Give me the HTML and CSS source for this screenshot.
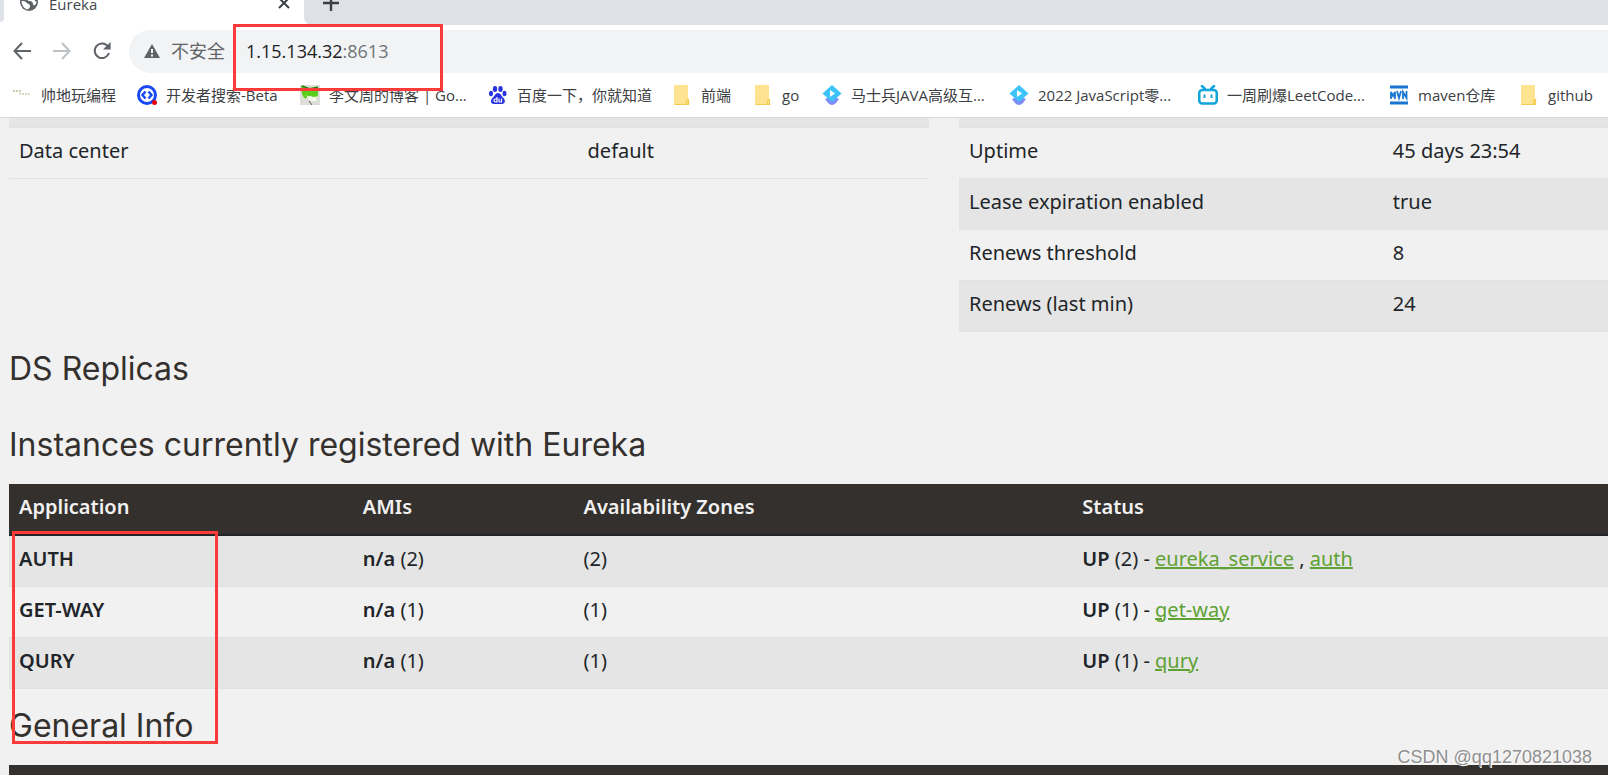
FILE: index.html
```html
<!DOCTYPE html>
<html lang="zh-CN">
<head>
<meta charset="utf-8">
<title>Eureka</title>
<link rel="stylesheet" href="styles.css">
</head>
<body>
<header class="browser">
  <div class="tabstrip">
    <div class="prev-tab"></div>
    <div class="tab">
      <svg class="tab-icon" viewBox="0 0 20 20"><circle cx="10" cy="10" r="9" fill="#5f6368"/><path d="M2.500 9c2 0 4 0 5 1.500S11 12 11 14s-1 2-2 3.500C5 17 2.500 13 2.500 9zM12 2.500c-1 2-1 3-3 4-1 2 0 2.500 2 2.500s3 1.500 3 3 1 1.500 2 1c1-1 1.500-2 1.500-3.500-1.500 0-2-1-2-2.500s-1-3-3.500-4.500z" fill="#fff"/></svg>
      <span class="tab-title">Eureka</span>
      <button class="icon-button tab-close" aria-label="关闭"><svg width="12" height="12" viewBox="0 0 12 12"><path d="M1 1l10 10M11 1L1 11" stroke="#3c4043" stroke-width="2"/></svg></button>
    </div>
    <button class="icon-button new-tab" aria-label="新标签页"><svg width="16" height="16" viewBox="0 0 16 16"><path d="M8 0v16M0 8h16" stroke="#3c4043" stroke-width="2.400"/></svg></button>
  </div>
  <div class="toolbar">
    <div class="nav-buttons">
      <button class="icon-button" aria-label="后退"><svg width="18" height="18" viewBox="0 0 18 18" fill="none" stroke="#5f6368" stroke-width="2"><path d="M18 9H2M9 1L1.500 9L9 17"/></svg></button>
      <button class="icon-button" aria-label="前进"><svg width="18" height="18" viewBox="0 0 18 18" fill="none" stroke="#bdc1c6" stroke-width="2"><path d="M0 9h16M9 1l7.500 8L9 17"/></svg></button>
      <button class="icon-button" aria-label="重新加载"><svg width="18" height="18" viewBox="0 0 18 18"><path d="M15 4.500A7.300 7.300 0 1 0 16 11" fill="none" stroke="#5f6368" stroke-width="2"/><path d="M17.600 0v7.500H10z" fill="#5f6368"/></svg></button>
    </div>
    <div class="omnibox">
      <svg class="warn" width="16" height="14" viewBox="0 0 16 14"><path d="M8 0l8 14H0z" fill="#5f6368"/><path d="M8 5v4M8 10.500v2" stroke="#f1f3f4" stroke-width="2"/></svg>
      <span class="insecure">不安全</span>
      <span class="url"><b>1.15.134.32</b>:8613</span>
    </div>
  </div>
  <nav class="bookmarks">
    <a href="#"><svg viewBox="0 0 20 20"><g stroke="#b9bd8c" stroke-width="1.500" stroke-dasharray="2 1"><path d="M1 6h9"/><path d="M7 9h12" stroke="#cfccb4"/></g></svg><span>帅地玩编程</span></a>
    <a href="#"><svg viewBox="0 0 20 20"><circle cx="10" cy="10" r="8.500" fill="#fff" stroke="#1848f5" stroke-width="3"/><path d="M8.500 6.500L5.500 10l3 3.500M11.500 6.500l3 3.500-3 3.500" fill="none" stroke="#1848f5" stroke-width="2.500"/><circle cx="17.500" cy="17.500" r="2.500" fill="#e60012"/></svg><span>开发者搜索-Beta</span></a>
    <a href="#"><svg viewBox="0 0 20 20"><path d="M0 0h20v20H0z" fill="#deded8"/><path d="M1 1l6 2 11-1v8l-2 4-12-1-2-4z" fill="#5bcb1c"/><path d="M2 1l8 3 8-2" stroke="#267a12" stroke-width="1.500" fill="none"/><path d="M6 10q2 2 5 1 3 2 6 0l-1 5q-5 1-8-2z" fill="#f2f7e8"/><path d="M9 16l3 4" stroke="#555"/></svg><span>李文周的博客 | Go...</span></a>
    <a href="#"><svg viewBox="0 0 20 20"><g fill="#2932e1"><ellipse cx="7" cy="4" rx="2.200" ry="3"/><ellipse cx="12.500" cy="4" rx="2.200" ry="3"/><ellipse cx="3" cy="8.500" rx="2" ry="2.800"/><ellipse cx="16.500" cy="8.500" rx="2" ry="2.800"/><path d="M10 8c2.500 0 3.500 3 5.500 5s2 6-1.500 6H6c-4 0-3.500-4-1.500-6S7.500 8 10 8z"/></g><path d="M9 12v5H7.500c-2 0-2-3 0-3H9M11 13.500V16q0 1 1 1h1.500v-3.500" fill="none" stroke="#fff" stroke-width="1.200"/></svg><span>百度一下，你就知道</span></a>
    <a href="#"><svg viewBox="0 0 20 20"><use href="#folder"/></svg><span>前端</span></a>
    <a href="#"><svg viewBox="0 0 20 20"><use href="#folder"/></svg><span>go</span></a>
    <a href="#"><svg viewBox="0 0 20 20"><use href="#gem"/></svg><span>马士兵JAVA高级互...</span></a>
    <a href="#"><svg viewBox="0 0 20 20"><use href="#gem"/></svg><span>2022 JavaScript零...</span></a>
    <a href="#"><svg viewBox="0 0 20 20"><rect x="1.250" y="5" width="17.500" height="13.500" rx="3" fill="#fff" stroke="#12a5dc" stroke-width="2.500"/><path d="M4 1l3 3M16 1l-3 3" stroke="#12a5dc" stroke-width="2.500" stroke-linecap="round"/><path d="M6.500 9.500v3.500M13.500 9.500v3.500" stroke="#12a5dc" stroke-width="2"/></svg><span>一周刷爆LeetCode...</span></a>
    <a href="#"><svg viewBox="0 0 20 20"><path d="M1 2h18M1 18h18" stroke="#1976d2" stroke-width="3"/><path d="M2 14V7l2 4 2-4v7M8 6l2 7 2-7M14 14V7l3.500 6V6" fill="none" stroke="#1976d2" stroke-width="1.800"/></svg><span>maven仓库</span></a>
    <a href="#"><svg viewBox="0 0 20 20"><use href="#folder"/></svg><span>github</span></a>
  </nav>
  <svg class="symbols" aria-hidden="true"><defs>
    <g id="folder"><path d="M3 0h12q1 0 1 1v13h1v5H3q-1 0-1-1V1q0-1 1-1z" fill="#fee391"/><path d="M2.500 18.500q0 1 1 1h13v-5l-2 1v3.500" fill="none" stroke="#f5cb4f" stroke-width="1.200"/></g>
    <g id="gem"><path d="M3 14l7-3 7 3-3 4q-4 4-8 0z" fill="#7d8cf7"/><path d="M10 0l9.500 8.500L10 17 .5 8.500z" fill="#3cc4fa"/><path d="M8 5l5 3.500-5 3.500z" fill="#fff"/></g>
  </defs></svg>
</header>
<main class="page">
  <div class="info-columns">
    <table class="info info-left">
      <tbody>
        <tr class="cut"><td></td><td></td></tr>
        <tr><td>Data center</td><td>default</td></tr>
      </tbody>
    </table>
    <table class="info info-right">
      <tbody>
        <tr class="cut"><td></td><td></td></tr>
        <tr><td>Uptime</td><td>45 days 23:54</td></tr>
        <tr><td>Lease expiration enabled</td><td>true</td></tr>
        <tr><td>Renews threshold</td><td>8</td></tr>
        <tr><td>Renews (last min)</td><td>24</td></tr>
      </tbody>
    </table>
  </div>
  <h1>DS Replicas</h1>
  <h1>Instances currently registered with Eureka</h1>
  <table class="instances">
    <thead><tr><th>Application</th><th>AMIs</th><th>Availability Zones</th><th>Status</th></tr></thead>
    <tbody>
      <tr><td><b>AUTH</b></td><td><b>n/a</b> (2)</td><td>(2)</td><td><b>UP</b> (2) - <a href="#">eureka_service</a> , <a href="#">auth</a></td></tr>
      <tr><td><b>GET-WAY</b></td><td><b>n/a</b> (1)</td><td>(1)</td><td><b>UP</b> (1) - <a href="#">get-way</a></td></tr>
      <tr><td><b>QURY</b></td><td><b>n/a</b> (1)</td><td>(1)</td><td><b>UP</b> (1) - <a href="#">qury</a></td></tr>
    </tbody>
  </table>
  <h1>General Info</h1>
  <div class="next-head"></div>
</main>
<div class="mark mark-url"></div>
<div class="mark mark-apps"></div>
<div class="watermark">CSDN @qq1270821038</div>
</body>
</html>
```

FILE: styles.css
```css
* { box-sizing: border-box; }
body {
  margin: 0;
  position: relative;
  height: 100vh;
  overflow: hidden;
  background: #f1f1f1;
  color: #212529;
  font-family: "Noto Sans", "Noto Sans CJK SC", sans-serif;
  font-size: 20px;
  line-height: 30px;
}
b, th { font-weight: 600; }
.icon-button { border: 0; padding: 0; background: none; display: flex; }
.browser {
  background: #fff;
  border-bottom: 1px solid #d9dbdd;
  font-family: "Open Sans", "Noto Sans CJK SC", sans-serif;
}
.tabstrip { display: flex; height: 25px; background: linear-gradient(90deg, #fff 20px, #dee1e6 20px); }
.prev-tab { flex: none; width: 4px; height: 22px; background: #dee1e6; border-bottom-right-radius: 4px; }
.tab {
  display: flex;
  align-items: flex-start;
  width: 304px;
  padding-left: 15px;
  background: #fff;
}
.tab-icon { width: 20px; height: 20px; margin-top: -8px; }
.tab-title { margin-left: 10px; font-size: 15px; line-height: 8px; color: #45494d; }
.tab-close { margin: -3px 18px 0 auto; }
.new-tab {
  flex: 1;
  height: 25px;
  padding-left: 19px;
  margin-left: -4px;
  background: #dee1e6;
  border-bottom-left-radius: 8px;
}
.new-tab svg { margin-top: -5px; }
.toolbar { display: flex; align-items: center; padding-top: 5px; }
.nav-buttons { display: flex; gap: 22px; padding: 0 18px 2px 13px; }
.omnibox {
  display: flex;
  align-items: center;
  flex: 1;
  height: 43px;
  padding: 0 0 1px 15px;
  background: #f1f3f4;
  border-radius: 22px 0 0 22px;
  font-size: 18px;
  color: #5f6368;
}
.insecure { margin-left: 11px; padding-right: 8px; border-right: 1px solid #9aa0a6; line-height: 20px; }
.url { margin-left: 12px; color: #6f7377; }
.url b { font-weight: 400; color: #202124; }
.bookmarks {
  display: grid;
  grid-template-columns: 125fr 163fr 188fr 184fr 81fr 69fr 187fr 189fr 191fr 130fr 89fr;
  padding-left: 12px;
  height: 44px;
  align-items: center;
}
.bookmarks a {
  display: flex;
  align-items: center;
  gap: 9px;
  font-size: 15px;
  line-height: 20px;
  color: #3c4043;
  text-decoration: none;
  white-space: nowrap;
}
.bookmarks svg { flex: none; width: 20px; height: 20px; }
.symbols { display: none; }
.page { padding-left: 9px; }
.info-columns { display: flex; align-items: flex-start; gap: 30px; }
table { border-collapse: collapse; table-layout: fixed; width: 100%; }
td, th { padding: 8px 10px 12px; text-align: left; height: 51px; }
td { border-bottom: 1px solid #dee2e6; }
.info-left { flex: 920; }
.info-right { flex: 649; }
.info-left td:first-child { width: 61.8%; }
.info-right td:first-child { width: 65.3%; }
.info tr:nth-child(odd) { background: #e5e5e5; }
.info .cut td { height: 9px; padding: 0; }
h1 {
  margin: 0;
  padding: 19px 0 21px;
  font-family: Inter, "Noto Sans", sans-serif;
  font-size: 32px;
  line-height: 36px;
  font-weight: 400;
  color: #34302d;
}
.instances th { background: #34302d; color: #f1f1f1; border-bottom: 2px solid #212529; padding-bottom: 11px; }
.instances th:nth-child(1) { width: 21.5%; }
.instances th:nth-child(2) { width: 13.8%; }
.instances th:nth-child(3) { width: 31.2%; }
.instances tbody tr:nth-child(odd) { background: #e5e5e5; }
.instances a { color: #5fa134; text-decoration: underline; text-decoration-thickness: 2px; }
.next-head { height: 51px; background: #34302d; }
.mark { position: absolute; border: 3px solid #fc3a3a; }
.mark-url { left: 233px; top: 24px; width: 210px; height: 67px; }
.mark-apps { left: 12px; top: 531px; width: 206px; height: 213px; }
.watermark {
  position: absolute;
  right: 16px;
  bottom: 8px;
  font-family: "Liberation Sans", Arial, sans-serif;
  font-size: 18px;
  line-height: 20px;
  color: #8f8f8f;
  text-shadow: 1px 1px 0 #fff;
}
```
